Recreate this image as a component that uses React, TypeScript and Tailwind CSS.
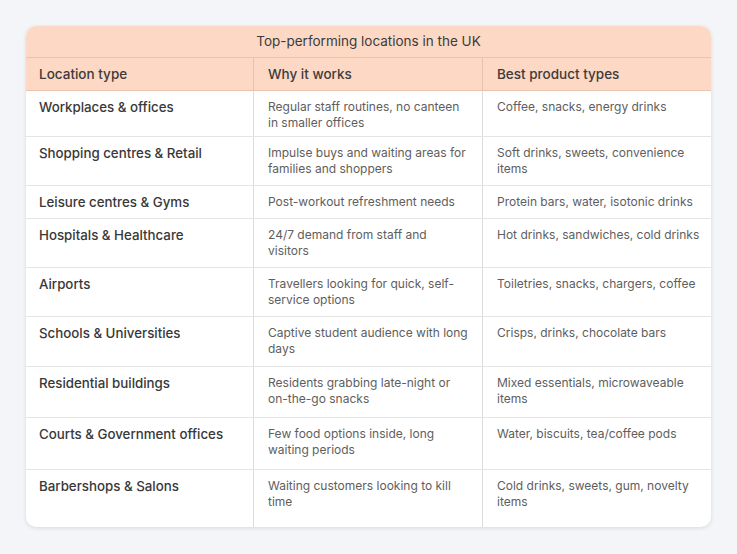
import React from "react";

const rows: { a: string; b: string; c: string; h: string }[] = [
  { a: "Workplaces & offices", b: "Regular staff routines, no canteen in smaller offices", c: "Coffee, snacks, energy drinks", h: "h-[46px]" },
  { a: "Shopping centres & Retail", b: "Impulse buys and waiting areas for families and shoppers", c: "Soft drinks, sweets, convenience items", h: "h-[49px]" },
  { a: "Leisure centres & Gyms", b: "Post-workout refreshment needs", c: "Protein bars, water, isotonic drinks", h: "h-[33px]" },
  { a: "Hospitals & Healthcare", b: "24/7 demand from staff and visitors", c: "Hot drinks, sandwiches, cold drinks", h: "h-[49px]" },
  { a: "Airports", b: "Travellers looking for quick, self-service options", c: "Toiletries, snacks, chargers, coffee", h: "h-[49px]" },
  { a: "Schools & Universities", b: "Captive student audience with long days", c: "Crisps, drinks, chocolate bars", h: "h-[50px]" },
  { a: "Residential buildings", b: "Residents grabbing late-night or on-the-go snacks", c: "Mixed essentials, microwaveable items", h: "h-[51px]" },
  { a: "Courts & Government offices", b: "Few food options inside, long waiting periods", c: "Water, biscuits, tea/coffee pods", h: "h-[52px]" },
  { a: "Barbershops & Salons", b: "Waiting customers looking to kill time", c: "Cold drinks, sweets, gum, novelty items", h: "h-[57px]" },
];

export default function App() {
  return (
    <div
      className="w-[737px] h-[554px] bg-[#f3f5f9] pt-[26px] px-[26px]"
      style={{ fontFamily: "Inter, 'Liberation Sans', sans-serif" }}
    >
      <div className="w-[685px] bg-white rounded-[10px] shadow-[0_1px_4px_rgba(0,0,0,0.12)] overflow-hidden">
        <div className="h-[32px] bg-[#fdd9c5] border-b border-[#e9c3ad] flex items-center justify-center text-[13.5px] text-[#3b3b3b]">
          Top-performing locations in the UK
        </div>
        <div className="grid grid-cols-[228px_229px_228px] h-[33px] bg-[#fdd9c5] border-b border-[#e6c4b0] text-[13.5px] font-medium text-[#403b39]">
          <div className="flex items-center pl-[13px] border-r border-[#e3c2ae]">Location type</div>
          <div className="flex items-center pl-[14px] border-r border-[#e3c2ae]">Why it works</div>
          <div className="flex items-center pl-[14px]">Best product types</div>
        </div>
        {rows.map((r, i) => (
          <div
            key={i}
            className={`grid grid-cols-[228px_229px_228px] ${r.h} ${i < rows.length - 1 ? "border-b border-[#e4e4e4]" : ""}`}
          >
            <div className="pl-[13px] pr-2 pt-[7px] border-r border-[#dcdcdc] text-[13.3px] leading-[18px] font-medium text-[#383838]">
              {r.a}
            </div>
            <div className="pl-[14px] pr-[14px] pt-[8px] border-r border-[#dcdcdc] text-[12px] leading-[16px] text-[#5e5e5e]">
              {r.b}
            </div>
            <div className="pl-[14px] pr-[10px] pt-[8px] text-[12px] leading-[16px] text-[#5e5e5e]">
              {r.c}
            </div>
          </div>
        ))}
      </div>
    </div>
  );
}
